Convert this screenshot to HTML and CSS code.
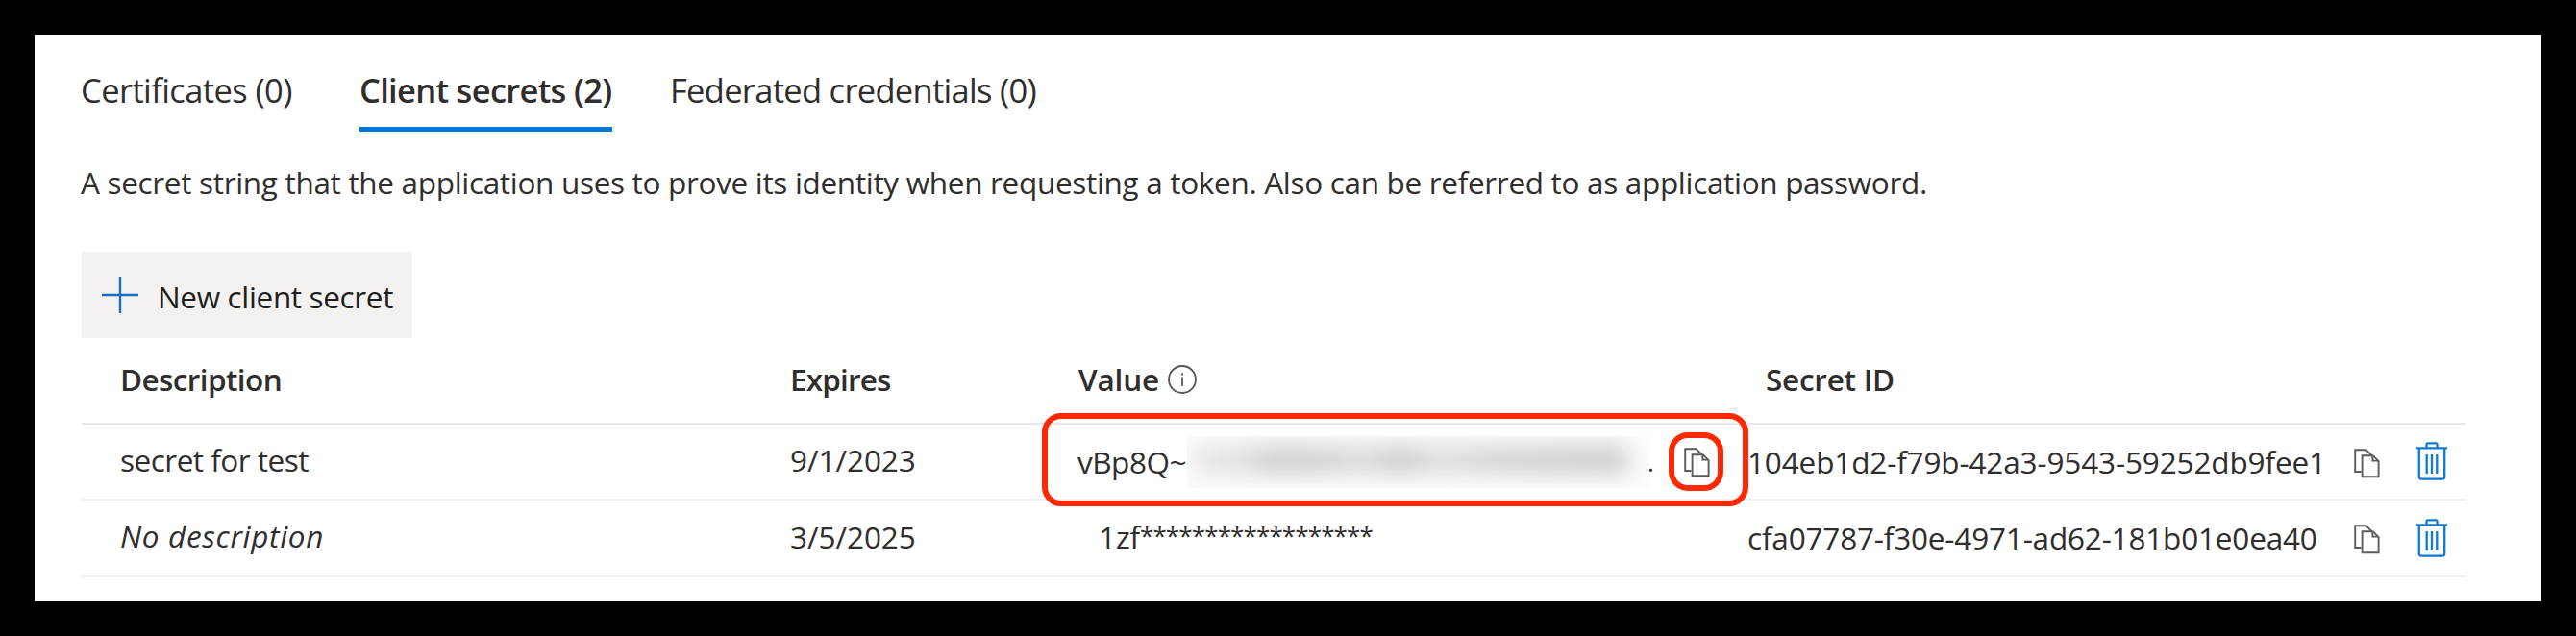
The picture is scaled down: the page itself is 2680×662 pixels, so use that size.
FILE: index.html
```
<!DOCTYPE html>
<html lang="en">
<head>
<meta charset="utf-8">
<title>Client secrets</title>
<link rel="stylesheet" href="styles.css">
</head>
<body>
<svg class="sprite" aria-hidden="true">
  <symbol id="copy" viewBox="0 0 27 31">
    <path d="M7.5 24H1.2V1.2H12.6L18.4 7" />
    <path d="M8.6 7.2H19.6L25.6 13.2V29.3H8.6Z" />
    <path d="M19.4 7.6V12.6H25.2" />
  </symbol>
  <symbol id="trash" viewBox="0 0 34 40">
    <path d="M1 6.4H33M11.5 6V2.6Q11.5 1.4 12.7 1.4H21.3Q22.5 1.4 22.5 2.6V6M3.8 6.4V36.2Q3.8 38.6 6.2 38.6H27.8Q30.2 38.6 30.2 36.2V6.4" />
    <path d="M11.7 13V33M17 13V33M22.3 13V33" />
  </symbol>
</svg>
<main class="panel">
  <nav class="tabs">
    <a class="tab t-cert">Certificates (0)</a>
    <a class="tab active">Client secrets (2)</a>
    <a class="tab">Federated credentials (0)</a>
  </nav>
  <p class="intro">A secret string that the application uses to prove its identity when requesting a token. Also can be referred to as application password.</p>
  <button class="new">
    <svg class="plus" viewBox="0 0 38 38"><path d="M19 0V38M0 19H38" /></svg>
    <span class="new-label">New client secret</span>
  </button>
  <section class="table">
    <div class="row head">
      <div class="cell h-desc">Description</div>
      <div class="cell h-exp">Expires</div>
      <div class="cell h-val"><span>Value</span>
        <svg class="info" viewBox="0 0 30 30"><circle cx="15" cy="15" r="14" /><path d="M15 12.5V22M15 8.2V10.4" /></svg>
      </div>
      <div class="cell h-id">Secret ID</div>
    </div>
    <div class="row first">
      <div class="cell desc">secret for test</div>
      <div class="cell exp">9/1/2023</div>
      <div class="cell">
        <span class="prefix">vBp8Q~</span><span class="redacted"><i class="smudge"></i></span><span class="dot">.</span>
        <div class="highlight"></div>
        <div class="ring"><svg class="copy"><use href="#copy" /></svg></div>
      </div>
      <div class="cell id-a">104eb1d2-f79b-42a3-9543-59252db9fee1</div>
      <div class="cell"><svg class="copy"><use href="#copy" /></svg></div>
      <div class="cell"><svg class="trash"><use href="#trash" /></svg></div>
    </div>
    <div class="row">
      <div class="cell desc none"><em>No description</em></div>
      <div class="cell exp">3/5/2025</div>
      <div class="cell masked"><span>1zf</span><span class="stars">******************</span></div>
      <div class="cell id-b">cfa07787-f30e-4971-ad62-181b01e0ea40</div>
      <div class="cell"><svg class="copy"><use href="#copy" /></svg></div>
      <div class="cell"><svg class="trash"><use href="#trash" /></svg></div>
    </div>
  </section>
</main>
</body>
</html>
```
FILE: styles.css
```
* { box-sizing: border-box; }
body {
  margin: 0;
  padding: 36px;
  height: 662px;
  background: #000;
  font-family: "Open Sans", "Noto Sans", sans-serif;
  font-size: 31.5px;
  line-height: 40px;
  color: #2f2e2d;
  white-space: nowrap;
}
.sprite { display: none; }
svg { display: block; fill: none; flex: none; }
.panel {
  width: 2608px;
  height: 590px;
  padding: 38px 79px 0 48px;
  background: #fff;
}

/* Tabs */
.tabs { display: flex; gap: 60px; font-size: 34.5px; letter-spacing: -0.71px; }
.tab { height: 63px; display: block; }
.t-cert { width: 230px; letter-spacing: -0.6px; }
.tab.active {
  width: 263px;
  font-weight: 600;
  letter-spacing: -0.7px;
  border-bottom: 5px solid #0078d4;
}

.intro { margin: 33px 0 52px; letter-spacing: -0.315px; }

.new {
  display: flex;
  align-items: center;
  width: 344px;
  height: 90px;
  margin-left: 1px;
  padding: 0 0 0 21px;
  border: 0;
  background: #f3f2f1;
  font: inherit;
  color: #201f1e;
}
.plus { width: 38px; height: 38px; stroke: #1a6fc4; stroke-width: 2.4; }
.new-label { margin: 4px 0 0 20px; letter-spacing: -0.35px; }

/* Secrets table */
.table { margin-left: 1px; }
.row {
  display: grid;
  grid-template-columns: 697px 299px 697px 631px 64px 52px;
  grid-template-rows: 100%;
  height: 80px;
  padding-left: 40px;
  border-bottom: 2px solid #f1f1f1;
}
.row.first { height: 79px; }
.row.head {
  height: 90px;
  padding-bottom: 3px;
  border-color: #e8e8e8;
  font-weight: 600;
}
.cell { position: relative; display: flex; align-items: center; }
.h-desc { letter-spacing: -0.6px; }
.h-exp { letter-spacing: -0.85px; }
.h-val { padding-left: 1px; letter-spacing: -0.17px; }
.h-id { padding-left: 19px; letter-spacing: -0.25px; }
.info { width: 30px; height: 30px; margin-left: 9px; stroke: #555; stroke-width: 1.8; }
.desc { padding-bottom: 4px; letter-spacing: -0.5px; }
.none { letter-spacing: 0.67px; }
.exp { padding-bottom: 3px; letter-spacing: -0.05px; }
.prefix { width: 114px; letter-spacing: -0.48px; }
.id-a { letter-spacing: -0.14px; }
.id-b { letter-spacing: -0.18px; }
.masked { padding: 0 0 2px 22px; letter-spacing: -0.13px; }
.stars { padding-bottom: 5px; font-size: 26px; letter-spacing: -0.88px; }

.redacted {
  display: flex;
  align-items: center;
  width: 481px;
  height: 54px;
  overflow: hidden;
  background: #fcfcfc;
}
.smudge {
  width: 452px;
  height: 27px;
  margin: 0 0 4px 6px;
  background: linear-gradient(90deg, #e6e6e6, #dcdcdc 12%, #cacaca 18%, #cfcfcf 32%, #dadada 38%, #c8c8c8 48%, #dcdcdc 57%, #d0d0d0 70%, #c8c8c8);
  filter: blur(12px);
}
.dot { width: 8px; margin-left: -2px; font-size: 26px; }
.highlight {
  position: absolute;
  left: -37px;
  top: -12px;
  width: 735px;
  height: 97px;
  border: 6px solid #fc2a04;
  border-radius: 20px;
}
.ring {
  display: flex;
  align-items: center;
  justify-content: center;
  width: 57px;
  height: 61px;
  margin-left: 14px;
  border: 6px solid #fc2a04;
  border-radius: 20px;
}
.copy { width: 27px; height: 31px; margin-top: 3px; stroke: #5c5b5a; stroke-width: 1.9; }
.ring .copy { margin: 2px 0 0 1px; }
.trash { width: 34px; height: 40px; margin-bottom: 1px; stroke: #0f7ad4; stroke-width: 2.3; }
```
